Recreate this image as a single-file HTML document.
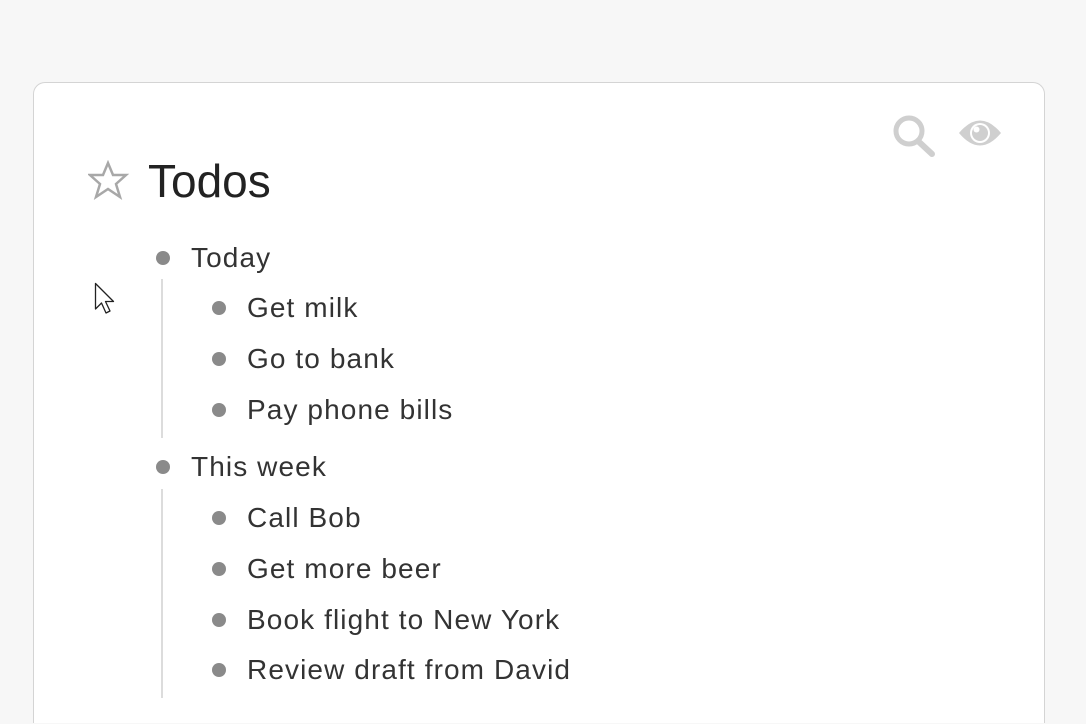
<!DOCTYPE html>
<html style="overflow:hidden;height:724px"><head><style>
body{margin:0;width:1086px;height:724px;background:#f7f7f7;overflow:hidden;font-family:"Liberation Sans",sans-serif;color:#333;position:relative}
.card{position:absolute;left:33px;top:82px;width:1010px;height:640px;background:#fff;border:1.5px solid #d4d4d4;border-bottom:none;border-radius:12px 12px 0 0}
.t{position:absolute;font-size:28px;letter-spacing:1.1px;line-height:1;white-space:nowrap;transform:translateY(-50%)}
.b{position:absolute;width:14px;height:14px;border-radius:50%;background:#8a8a8a;transform:translate(-50%,-50%)}
.l{position:absolute;left:161px;width:1.5px;background:#dcdcdc}
</style></head><body>
<div class="card"></div>
<svg style="position:absolute;left:88px;top:160px" width="42" height="40" viewBox="0 0 42 40"><polygon points="20,3 25,15 38,15 28,24 32,37 20,29 8,37 12,24 2,15 15,15" fill="none" stroke="#a8a8a8" stroke-width="2.5" stroke-linejoin="miter"/></svg>
<div class="t" style="left:148px;top:181px;font-size:46px;letter-spacing:0;color:#222">Todos</div>
<svg style="position:absolute;left:890px;top:112px" width="50" height="45"><circle cx="19" cy="19" r="13" fill="none" stroke="#cfcfcf" stroke-width="5"/><line x1="28" y1="29" x2="42" y2="42" stroke="#cfcfcf" stroke-width="6" stroke-linecap="round"/></svg>
<svg style="position:absolute;left:957px;top:116px" width="46" height="34"><path d="M2 17 Q23 -8 44 17 Q23 42 2 17Z" fill="#cfcfcf"/><circle cx="23" cy="17" r="10" fill="#fff"/><circle cx="23" cy="17" r="8" fill="#cfcfcf"/><circle cx="19.5" cy="13.5" r="3" fill="#fff"/></svg>
<div class="l" style="top:279px;height:159px"></div>
<div class="l" style="top:489px;height:209px"></div>
<div class="b" style="left:163px;top:258px"></div><div class="t" style="left:191px;top:258px">Today</div>
<div class="b" style="left:219px;top:308px"></div><div class="t" style="left:247px;top:308px">Get milk</div>
<div class="b" style="left:219px;top:359px"></div><div class="t" style="left:247px;top:359px">Go to bank</div>
<div class="b" style="left:219px;top:410px"></div><div class="t" style="left:247px;top:410px">Pay phone bills</div>
<div class="b" style="left:163px;top:467px"></div><div class="t" style="left:191px;top:467px">This week</div>
<div class="b" style="left:219px;top:518px"></div><div class="t" style="left:247px;top:518px">Call Bob</div>
<div class="b" style="left:219px;top:569px"></div><div class="t" style="left:247px;top:569px">Get more beer</div>
<div class="b" style="left:219px;top:620px"></div><div class="t" style="left:247px;top:620px">Book flight to New York</div>
<div class="b" style="left:219px;top:670px"></div><div class="t" style="left:247px;top:670px">Review draft from David</div>
<svg style="position:absolute;left:94px;top:282px" width="26" height="36"><path d="M1.5 1.5 L1.5 27 L7.5 21 L12 31 L16 29 L11.5 19.5 L19.5 19.5 Z" fill="#fff" stroke="#222" stroke-width="1.3" stroke-linejoin="round"/></svg>
</body></html>
